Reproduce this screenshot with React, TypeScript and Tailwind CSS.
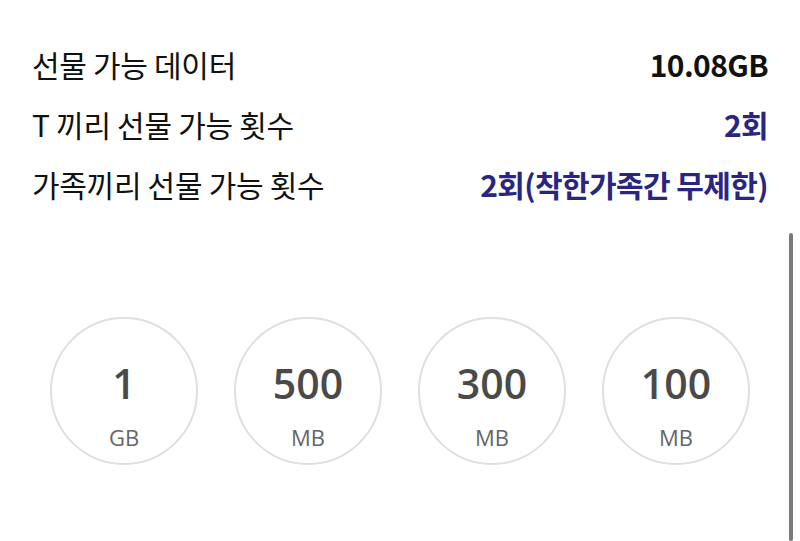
const ROWS = [
  { label: "선물 가능 데이터", value: "10.08GB", accent: false },
  { label: "T 끼리 선물 가능 횟수", value: "2회", accent: true },
  { label: "가족끼리 선물 가능 횟수", value: "2회(착한가족간 무제한)", accent: true },
];

const AMOUNTS = [
  { amount: "1", unit: "GB" },
  { amount: "500", unit: "MB" },
  { amount: "300", unit: "MB" },
  { amount: "100", unit: "MB" },
];

export default function App() {
  return (
    <div className="relative h-[541px] w-[800px] overflow-hidden bg-white font-['Noto_Sans_CJK_KR','Noto_Sans',sans-serif]">
      <div className="flex flex-col px-[32px] pt-[34px]">
        {ROWS.map((row) => (
          <div key={row.label} className="flex h-[60px] items-center justify-between">
            <span className="text-[30px] tracking-[-0.3px] text-[#111]">{row.label}</span>
            <span
              className={`text-[30px] font-bold tracking-[-0.6px] ${row.accent ? "text-[#2a2680]" : "text-[#111]"}`}
            >
              {row.value}
            </span>
          </div>
        ))}
      </div>

      <div className="mt-[103px] flex gap-[36px] pl-[50px]">
        {AMOUNTS.map((item) => (
          <div
            key={item.amount}
            className="flex h-[148px] w-[148px] flex-col items-center rounded-full border-2 border-[#dfdfdf] pt-[44px]"
          >
            <span className="font-['Open_Sans',sans-serif] text-[41px] leading-none font-semibold text-[#4a4a4a]">
              {item.amount}
            </span>
            <span className="mt-[22px] font-['Open_Sans',sans-serif] text-[22px] leading-none text-[#666]">
              {item.unit}
            </span>
          </div>
        ))}
      </div>

      <div className="absolute top-[233px] right-[7px] bottom-0 w-[4px] rounded-full bg-[#7a7a7a]" />
    </div>
  );
}
